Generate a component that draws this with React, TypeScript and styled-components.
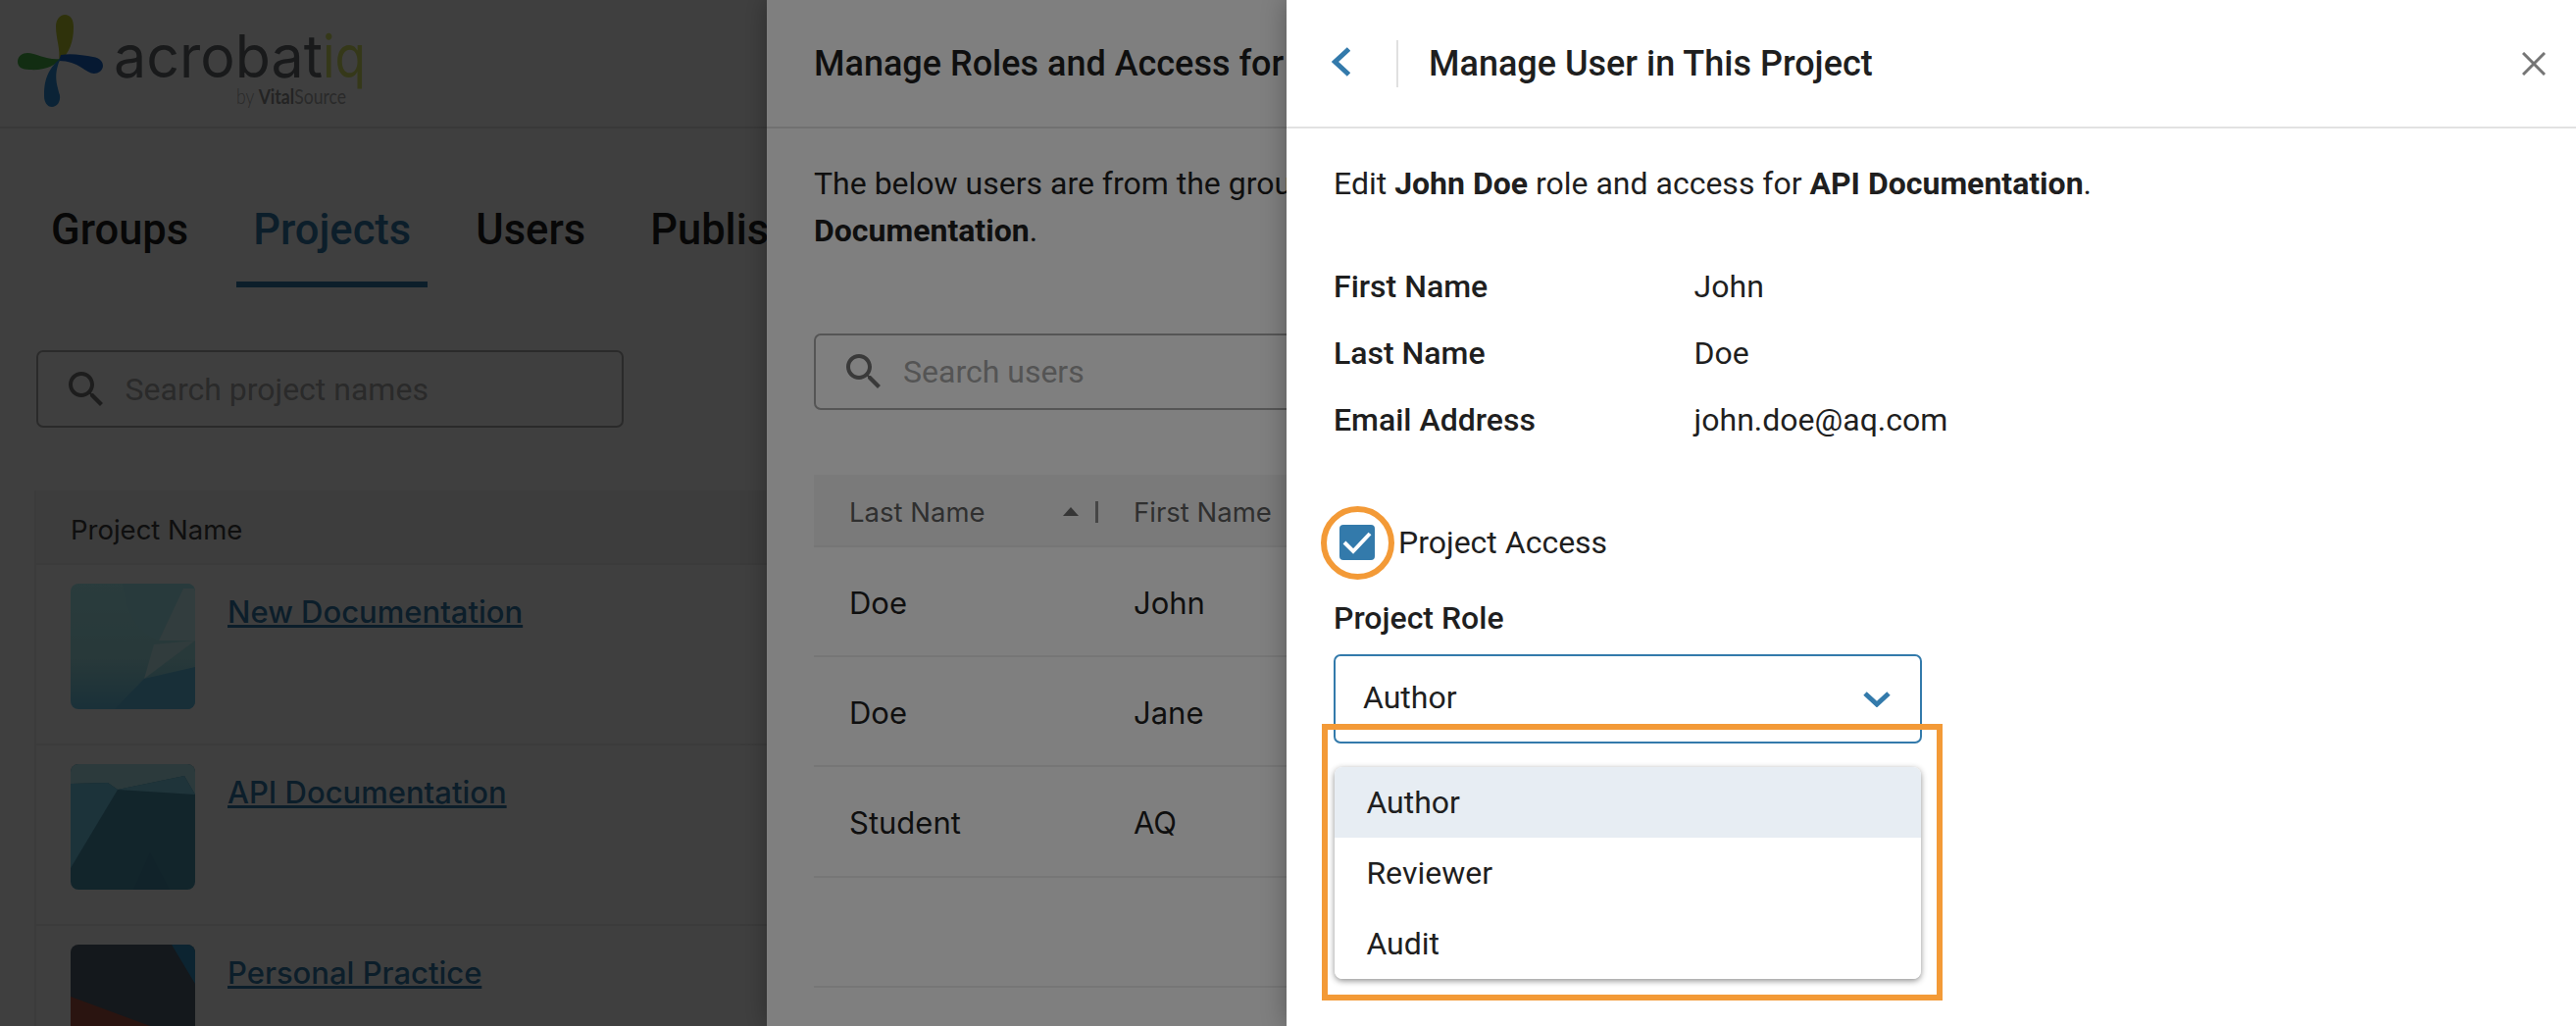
import React from "react";
import styled, { createGlobalStyle } from "styled-components";

const Global = createGlobalStyle`
  html, body { margin: 0; padding: 0; background: #fff; }
  #root { width: 100vw; height: 100vh; }
  * { box-sizing: border-box; }
`;

const BLUE = "#337aab";
const ORANGE = "#f39a37";

const Stage = styled.div`
  position: relative;
  width: 100%;
  height: 100%;
  overflow: hidden;
  background: #fff;
  font-family: Roboto, "Liberation Sans", sans-serif;
  color: #1f1f1f;
`;
const Page = styled.div`
  display: flex;
  flex-direction: column;
  width: 100%;
`;
const TopBar = styled.header`
  height: 131px;
  border-bottom: 2px solid #e6e6e6;
  flex: none;
`;
const LogoSvg = styled.svg`
  display: block;
`;
const Tabs = styled.nav`
  display: flex;
  gap: 32px;
  padding: 60px 0 0 35px;
`;
const Tab = styled.div<{ $active?: boolean }>`
  padding: 0 17px 9px;
  height: 102px;
  line-height: 87px;
  font-size: 43.5px;
  font-weight: 500;
  white-space: nowrap;
  color: ${(p) => (p.$active ? BLUE : "#1f1f1f")};
  border-bottom: 6px solid ${(p) => (p.$active ? BLUE : "transparent")};
`;
const SearchBox = styled.div<{ $w: number; $h: number; $mt: number; $ml: number }>`
  display: flex;
  align-items: center;
  gap: 16px;
  width: ${(p) => p.$w}px;
  height: ${(p) => p.$h}px;
  margin: ${(p) => p.$mt}px 0 0 ${(p) => p.$ml}px;
  padding-left: 25px;
  border: 2px solid #aaa;
  border-radius: 7px;
  flex: none;
  background: #fff;
`;
const SearchIcon = styled.svg`
  width: 48px;
  height: 48px;
  fill: #757575;
  flex: none;
`;
const Placeholder = styled.span`
  font-size: 32px;
  color: #a9a9a9;
  white-space: nowrap;
`;
const ProjectTable = styled.div`
  margin: 64px 0 0 35px;
  border-left: 2px solid #ececec;
`;
const ProjectHead = styled.div`
  height: 76px;
  padding: 6px 0 0 35px;
  display: flex;
  align-items: center;
  background: #f4f4f4;
  border-bottom: 2px solid #ececec;
  font-family: Inter, Roboto, sans-serif;
  font-size: 27.5px;
  color: #3c3c3c;
`;
const ProjectRow = styled.div`
  height: 184px;
  padding: 19px 0 0 35px;
  display: flex;
  gap: 33px;
  border-bottom: 2px solid #ececec;
`;
const Thumb = styled.svg`
  width: 127px;
  height: 128px;
  border-radius: 8px;
  flex: none;
  display: block;
`;
const ProjectLink = styled.a`
  font-family: Inter, Roboto, sans-serif;
  font-size: 31px;
  font-weight: 500;
  line-height: 36px;
  margin-top: 11px;
  color: ${BLUE};
  text-decoration: underline;
  white-space: nowrap;
  height: 36px;
`;
const Scrim = styled.div`
  position: absolute;
  inset: 0;
  background: rgba(0, 0, 0, 0.5);
`;
const Drawer = styled.aside<{ $left: number }>`
  position: absolute;
  top: 0;
  bottom: 0;
  right: 0;
  left: ${(p) => p.$left}px;
  background: #fff;
  box-shadow: 0 0 24px rgba(0, 0, 0, 0.3);
  overflow: hidden;
  display: flex;
  flex-direction: column;
`;
const DrawerHead = styled.div`
  height: 131px;
  flex: none;
  display: flex;
  align-items: center;
  border-bottom: 2px solid #e2e2e2;
`;
const DrawerTitle = styled.h2<{ $pl: number }>`
  margin: 0;
  padding-left: ${(p) => p.$pl}px;
  font-size: 36px;
  font-weight: 500;
  white-space: nowrap;
  color: #1f1f1f;
`;
const BackIcon = styled.svg`
  width: 19px;
  height: 30px;
  margin: 0 0 3px 46px;
  flex: none;
  fill: none;
  stroke: ${BLUE};
  stroke-width: 5;
`;
const HeadRule = styled.span`
  width: 2px;
  height: 48px;
  margin-left: 47px;
  background: #e0e0e0;
  flex: none;
`;
const CloseIcon = styled.svg`
  width: 24px;
  height: 24px;
  margin-left: auto;
  margin-right: 31px;
  flex: none;
  stroke: #757575;
  stroke-width: 3;
`;
const Para = styled.p`
  margin: 31.5px 0 0 48px;
  font-size: 32px;
  line-height: 48.5px;
  white-space: nowrap;
  color: #1f1f1f;
  b { font-weight: 700; }
`;
const UserTable = styled.div`
  margin: 66px 0 0 48px;
`;
const UserHead = styled.div`
  display: grid;
  grid-template-columns: 290px 290px 1fr;
  height: 74px;
  padding-top: 3px;
  align-items: center;
  background: #f4f4f4;
  border-bottom: 2px solid #ededed;
  font-family: Inter, Roboto, sans-serif;
  font-size: 27.5px;
  color: #5f5f5f;
`;
const HeadCell = styled.div`
  display: flex;
  align-items: center;
  padding-left: 36px;
`;
const HeadLabel = styled.span`
  flex: 1;
  white-space: nowrap;
`;
const SortIcon = styled.svg`
  width: 16px;
  height: 9px;
  margin-right: 17px;
  fill: #6d6d6d;
  flex: none;
`;
const ColRule = styled.span`
  width: 3.5px;
  height: 22px;
  background: #8d8d8d;
  flex: none;
`;
const UserRow = styled.div`
  display: grid;
  grid-template-columns: 290px 290px 1fr;
  height: 112.2px;
  padding-top: 3px;
  align-items: center;
  border-bottom: 2.5px solid #ededed;
  font-family: Inter, Roboto, sans-serif;
  font-size: 31px;
  color: #1f1f1f;
`;
const UserCell = styled.div`
  padding-left: 36px;
`;
const Details = styled.dl`
  margin: 46.5px 0 0 48px;
  display: grid;
  grid-template-columns: 367.6px 1fr;
  grid-auto-rows: 68px;
  align-items: center;
  font-size: 32px;
`;
const Term = styled.dt`
  font-weight: 500;
`;
const Value = styled.dd`
  margin: 0;
`;
const AccessRow = styled.div`
  margin: 61.5px 0 0 54px;
  height: 60px;
  display: flex;
  align-items: center;
  gap: 24px;
  font-size: 32px;
`;
const CheckBox = styled.span`
  width: 36px;
  height: 36px;
  border-radius: 4px;
  background: ${BLUE};
  display: flex;
  flex: none;
`;
const CheckIcon = styled.svg`
  width: 36px;
  height: 36px;
  fill: none;
  stroke: #fff;
  stroke-width: 4;
`;
const FieldLabel = styled.div`
  margin: 23px 0 0 48px;
  font-size: 32px;
  font-weight: 500;
  line-height: 48px;
`;
const SelectWrap = styled.div`
  position: relative;
  margin: 13px 0 0 48px;
  width: 600px;
`;
const SelectBox = styled.div`
  height: 91px;
  padding: 0 30px 3px 28px;
  border: 2.5px solid ${BLUE};
  border-radius: 7px;
  display: flex;
  align-items: center;
  justify-content: space-between;
  font-size: 32px;
`;
const SelectChevron = styled.svg`
  width: 28px;
  height: 16px;
  margin-top: 3px;
  fill: none;
  stroke: ${BLUE};
  stroke-width: 5;
  flex: none;
`;
const Menu = styled.ul`
  position: absolute;
  left: 1.4px;
  right: 1.4px;
  top: 115.4px;
  margin: 0;
  padding: 0;
  list-style: none;
  background: #fff;
  border-radius: 8px;
  overflow: hidden;
  box-shadow: 0 2px 6px rgba(0, 0, 0, 0.45);
`;
const MenuItem = styled.li<{ $on?: boolean }>`
  height: 72px;
  padding-left: 32px;
  display: flex;
  align-items: center;
  font-size: 32px;
  background: ${(p) => (p.$on ? "#e7edf3" : "#fff")};
`;
const RingMark = styled.span`
  position: absolute;
  left: 35px;
  top: 516px;
  width: 75px;
  height: 75px;
  border: 6px solid ${ORANGE};
  border-radius: 50%;
  pointer-events: none;
`;
const BoxMark = styled.span`
  position: absolute;
  left: 36px;
  top: 738px;
  width: 633px;
  height: 282px;
  border: 6px solid ${ORANGE};
  pointer-events: none;
`;

const SEARCH_D =
  "M15.5 14h-.79l-.28-.27C15.41 12.59 16 11.11 16 9.5 16 5.91 13.09 3 9.5 3S3 5.91 3 9.5 5.91 16 9.5 16c1.61 0 3.09-.59 4.23-1.57l.27.28v.79l5 4.99L20.49 19l-4.99-5zm-6 0C7.01 14 5 11.99 5 9.5S7.01 5 9.5 5 14 7.01 14 9.5 11.99 14 9.5 14z";

const Logo = () => (
  <LogoSvg width="400" height="129" viewBox="0 0 400 129">
    <path d="M57 27C57 19 62 15 66 15C72 15 75 20 75 28C75 42 71 55 60 63C62 50 57 40 57 27Z" fill="#bcc92f" />
    <path d="M18 63C18 57 23 54 28 54C37 54 48 62 62 60C56 67 46 72 30 71C22 71 18 68 18 63Z" fill="#48b54a" />
    <path d="M62 56C72 54 85 56 95 58C102 59 105 63 105 67C105 72 100 75 96 75C88 75 80 62 60 62Z" fill="#1a66c8" />
    <path d="M62 59C54 76 58 86 61 97C62 104 58 109 53 109C48 109 45 104 45 98C45 84 47 72 62 59Z" fill="#2f8fd8" />
    <text x="116" y="79" fontFamily="Inter, sans-serif" fontWeight="400" fontSize="60" textLength="213" lengthAdjust="spacingAndGlyphs" fill="#666a6e">acrobat</text>
    <text x="329" y="79" fontFamily="Inter, sans-serif" fontWeight="400" fontSize="60" textLength="44" lengthAdjust="spacingAndGlyphs" fill="#d4e264">iq</text>
    <text x="241" y="106" fontFamily="Lato, sans-serif" fontSize="21" textLength="112" lengthAdjust="spacingAndGlyphs" fill="#a8a8a8">
      <tspan fontWeight="300">by </tspan>
      <tspan fontWeight="700" fill="#8f8f8f">Vital</tspan>
      <tspan>Source</tspan>
    </text>
  </LogoSvg>
);

const ThumbOne = () => (
  <Thumb viewBox="0 0 127 128" preserveAspectRatio="none">
    <defs>
      <linearGradient id="t1" x1="0" y1="0" x2="0" y2="1">
        <stop offset="0" stopColor="#a8f0f4" />
        <stop offset="0.6" stopColor="#a0e4e8" />
        <stop offset="1" stopColor="#68c4e4" />
      </linearGradient>
    </defs>
    <rect width="127" height="128" fill="url(#t1)" />
    <path d="M53 0Q60 50 90 58L127 58V0Z" fill="#a0e8f0" />
    <path d="M115 5L90 58H127V5Z" fill="#c8f4f8" />
    <path d="M85 62L127 58L75 97Z" fill="#c4f0f4" />
    <path d="M45 128L75 97L127 85V128Z" fill="#60bce0" />
  </Thumb>
);
const ThumbTwo = () => (
  <Thumb viewBox="0 0 127 128" preserveAspectRatio="none">
    <rect width="127" height="128" fill="#4a94ae" />
    <path d="M0 0H127V31L116 12L48 26L38 19L0 20Z" fill="#b0e8f0" />
    <path d="M48 26L116 12L127 31Z" fill="#7cd0e8" />
    <path d="M0 20L38 19L48 26L0 106Z" fill="#70cce8" />
    <path d="M64 128L81 90L101 128Z" fill="#448ea8" />
  </Thumb>
);
const ThumbThree = () => (
  <Thumb viewBox="0 0 127 128" preserveAspectRatio="none">
    <rect width="127" height="128" fill="#506070" />
    <path d="M103 0L127 40V0Z" fill="#3090c4" />
    <path d="M0 53L127 100V128H0Z" fill="#a85040" />
  </Thumb>
);

const Search = ({ text, w, h, mt, ml }: { text: string; w: number; h: number; mt: number; ml: number }) => (
  <SearchBox $w={w} $h={h} $mt={mt} $ml={ml}>
    <SearchIcon viewBox="0 0 24 24"><path d={SEARCH_D} /></SearchIcon>
    <Placeholder>{text}</Placeholder>
  </SearchBox>
);

export default function App() {
  return (
    <Stage>
      <Global />
      <Page>
        <TopBar><Logo /></TopBar>
        <Tabs>
          <Tab>Groups</Tab>
          <Tab $active>Projects</Tab>
          <Tab>Users</Tab>
          <Tab>Publishers</Tab>
        </Tabs>
        <Search text="Search project names" w={599} h={79} mt={64} ml={36.5} />
        <ProjectTable>
          <ProjectHead>Project Name</ProjectHead>
          <ProjectRow><ThumbOne /><ProjectLink>New Documentation</ProjectLink></ProjectRow>
          <ProjectRow><ThumbTwo /><ProjectLink>API Documentation</ProjectLink></ProjectRow>
          <ProjectRow><ThumbThree /><ProjectLink>Personal Practice</ProjectLink></ProjectRow>
        </ProjectTable>
      </Page>
      <Scrim />
      <Drawer $left={782}>
        <DrawerHead>
          <DrawerTitle $pl={48}>Manage Roles and Access for</DrawerTitle>
        </DrawerHead>
        <Para>
          The below users are from the group
          <br />
          <b>Documentation</b>.
        </Para>
        <Search text="Search users" w={560} h={78} mt={80.5} ml={48} />
        <UserTable>
          <UserHead>
            <HeadCell>
              <HeadLabel>Last Name</HeadLabel>
              <SortIcon viewBox="0 0 16 9"><path d="M8 0L16 9H0Z" /></SortIcon>
              <ColRule />
            </HeadCell>
            <HeadCell><HeadLabel>First Name</HeadLabel></HeadCell>
            <HeadCell />
          </UserHead>
          <UserRow><UserCell>Doe</UserCell><UserCell>John</UserCell><UserCell /></UserRow>
          <UserRow><UserCell>Doe</UserCell><UserCell>Jane</UserCell><UserCell /></UserRow>
          <UserRow><UserCell>Student</UserCell><UserCell>AQ</UserCell><UserCell /></UserRow>
          <UserRow />
        </UserTable>
      </Drawer>
      <Scrim />
      <Drawer $left={1312}>
        <DrawerHead>
          <BackIcon viewBox="0 0 19 30"><path d="M17.5 2L3.5 15L17.5 28" /></BackIcon>
          <HeadRule />
          <DrawerTitle $pl={31}>Manage User in This Project</DrawerTitle>
          <CloseIcon viewBox="0 0 24 24"><path d="M1 1L23 23M23 1L1 23" /></CloseIcon>
        </DrawerHead>
        <Para>
          Edit <b>John Doe</b> role and access for <b>API Documentation</b>.
        </Para>
        <Details>
          <Term>First Name</Term><Value>John</Value>
          <Term>Last Name</Term><Value>Doe</Value>
          <Term>Email Address</Term><Value>john.doe@aq.com</Value>
        </Details>
        <AccessRow>
          <CheckBox>
            <CheckIcon viewBox="0 0 36 36"><path d="M5 18L14 27L31 9" /></CheckIcon>
          </CheckBox>
          Project Access
        </AccessRow>
        <FieldLabel>Project Role</FieldLabel>
        <SelectWrap>
          <SelectBox>
            Author
            <SelectChevron viewBox="0 0 28 16"><path d="M2 2L14 13L26 2" /></SelectChevron>
          </SelectBox>
          <Menu>
            <MenuItem $on>Author</MenuItem>
            <MenuItem>Reviewer</MenuItem>
            <MenuItem>Audit</MenuItem>
          </Menu>
        </SelectWrap>
        <RingMark />
        <BoxMark />
      </Drawer>
    </Stage>
  );
}
